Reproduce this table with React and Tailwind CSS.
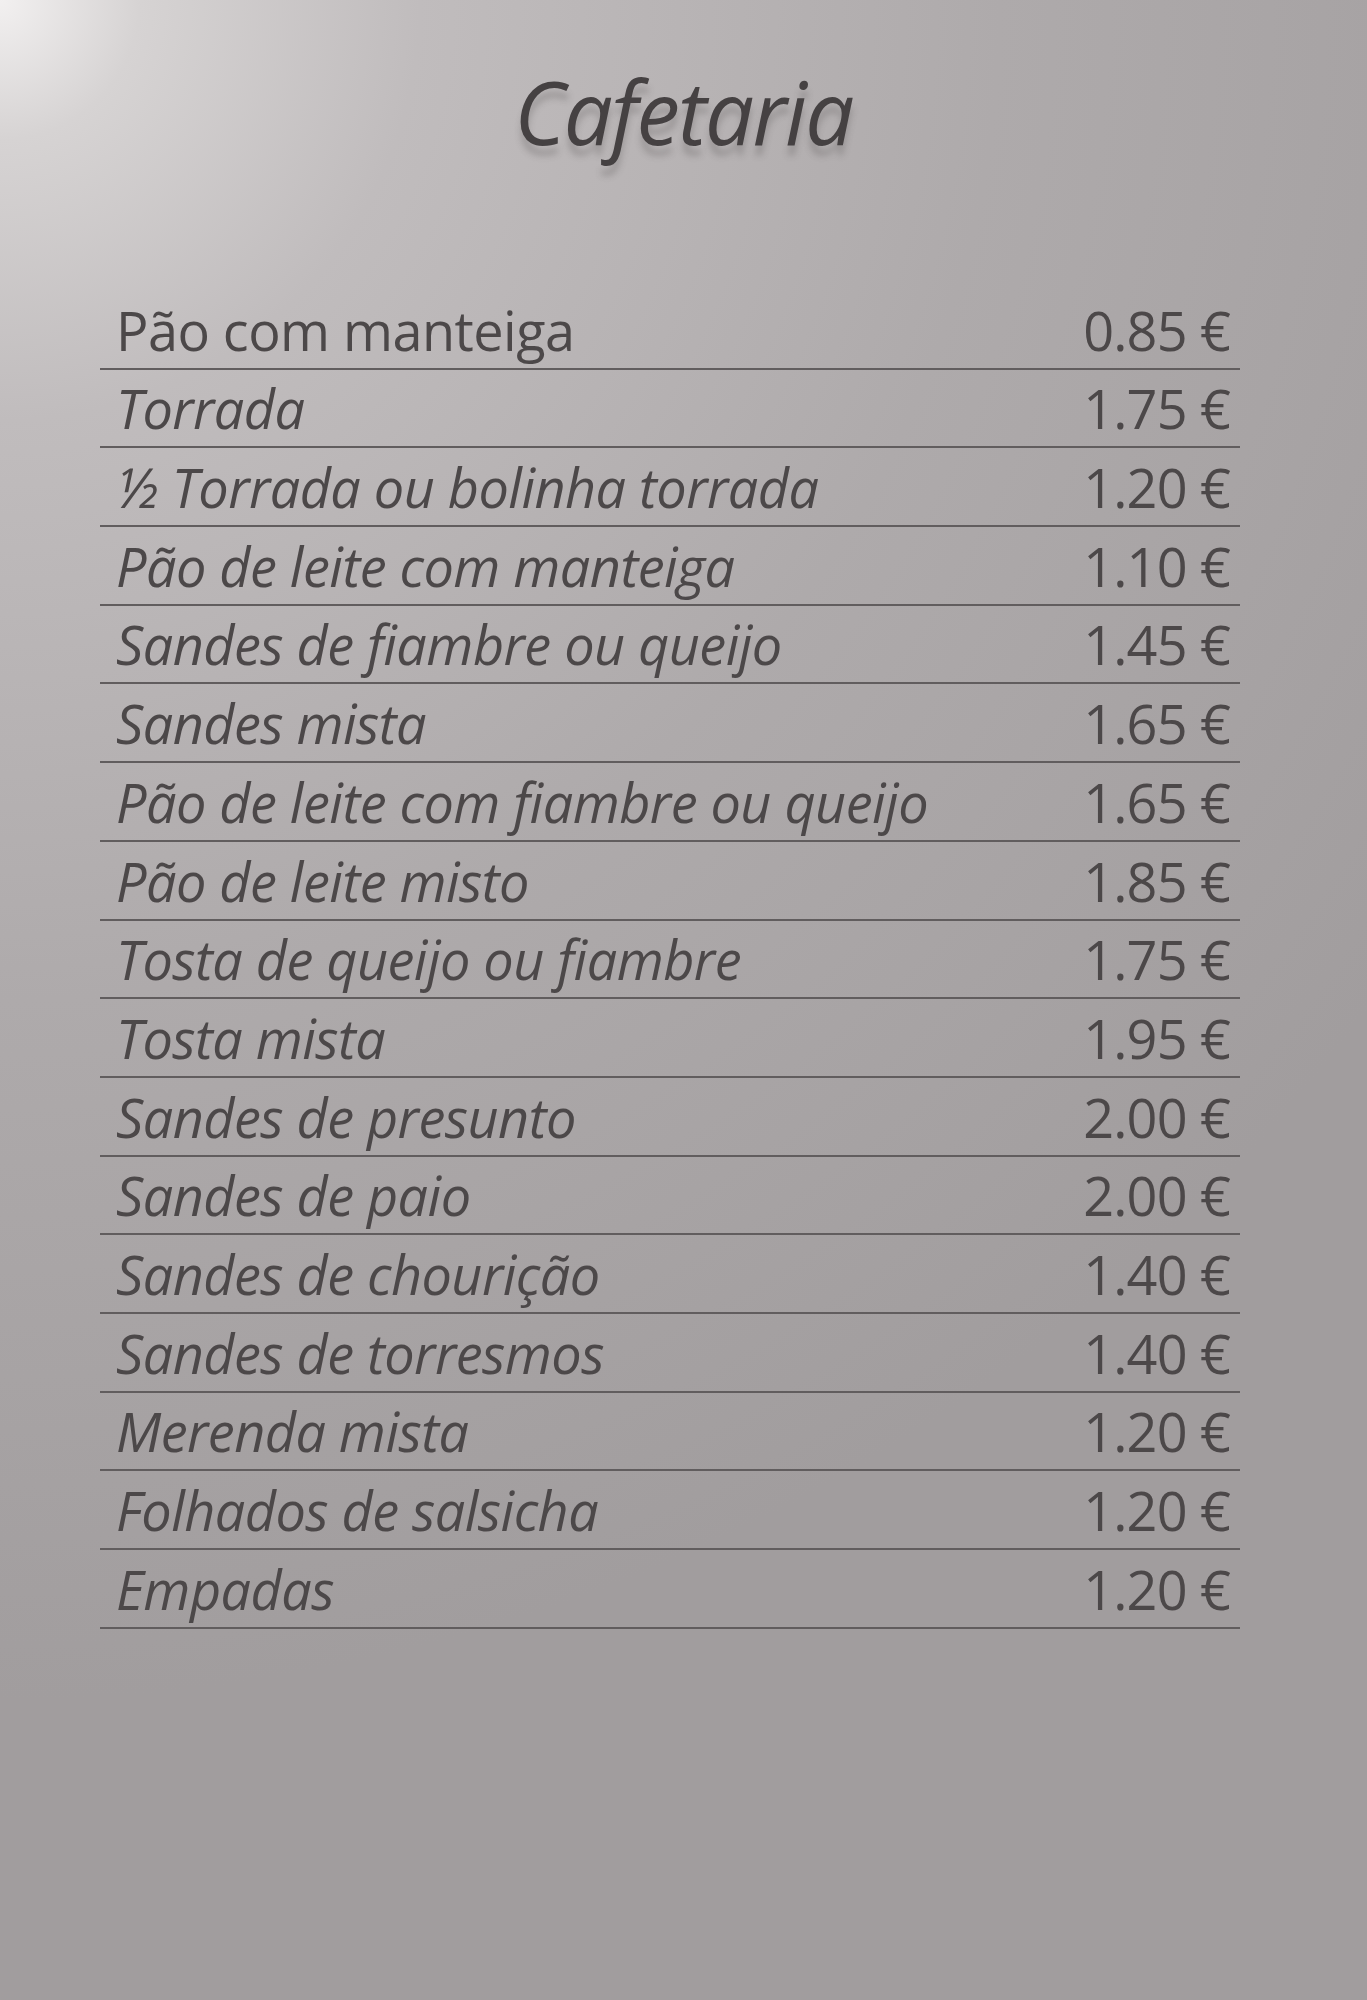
import React from 'react';

const items = [
  { name: 'Pão com manteiga', price: '0.85 €', upright: true },
  { name: 'Torrada', price: '1.75 €' },
  { name: '½ Torrada ou bolinha torrada', price: '1.20 €' },
  { name: 'Pão de leite com manteiga', price: '1.10 €' },
  { name: 'Sandes de fiambre ou queijo', price: '1.45 €' },
  { name: 'Sandes mista', price: '1.65 €' },
  { name: 'Pão de leite com fiambre ou queijo', price: '1.65 €' },
  { name: 'Pão de leite misto', price: '1.85 €' },
  { name: 'Tosta de queijo ou fiambre', price: '1.75 €' },
  { name: 'Tosta mista', price: '1.95 €' },
  { name: 'Sandes de presunto', price: '2.00 €' },
  { name: 'Sandes de paio', price: '2.00 €' },
  { name: 'Sandes de chourição', price: '1.40 €' },
  { name: 'Sandes de torresmos', price: '1.40 €' },
  { name: 'Merenda mista', price: '1.20 €' },
  { name: 'Folhados de salsicha', price: '1.20 €' },
  { name: 'Empadas', price: '1.20 €' },
];

function MenuRow({ name, price, upright }) {
  return (
    <li className="flex h-[78.7px] items-end justify-between border-b-2 border-[#615d5e] pb-[11px] pl-[16px] pr-[10px]">
      <span className={`text-[54px] leading-none tracking-[-0.01em] ${upright ? '' : 'italic'}`}>
        {name}
      </span>
      <span className="text-[54px] leading-none tracking-[-0.015em]">{price}</span>
    </li>
  );
}

export default function App() {
  return (
    <div
      className="min-h-[2000px] w-full bg-[radial-gradient(circle_at_0%_0%,#f2f0f0_0px,#d6d3d3_140px,#c0bcbd_420px,#aeaaab_1000px,#a19d9e_1700px)] text-[#4c4849]"
      style={{ fontFamily: '"Open Sans", "Noto Sans", sans-serif' }}
    >
      <div className="pt-[68px] text-center">
        <h1 className="text-[87px] italic leading-none tracking-[-0.02em] text-[#454142] [text-shadow:0_10px_6px_rgba(70,66,67,0.25)]">
          Cafetaria
        </h1>
      </div>

      <ul className="ml-[100px] mt-[136px] w-[1140px]">
        {items.map((item) => (
          <MenuRow key={item.name} {...item} />
        ))}
      </ul>
    </div>
  );
}
